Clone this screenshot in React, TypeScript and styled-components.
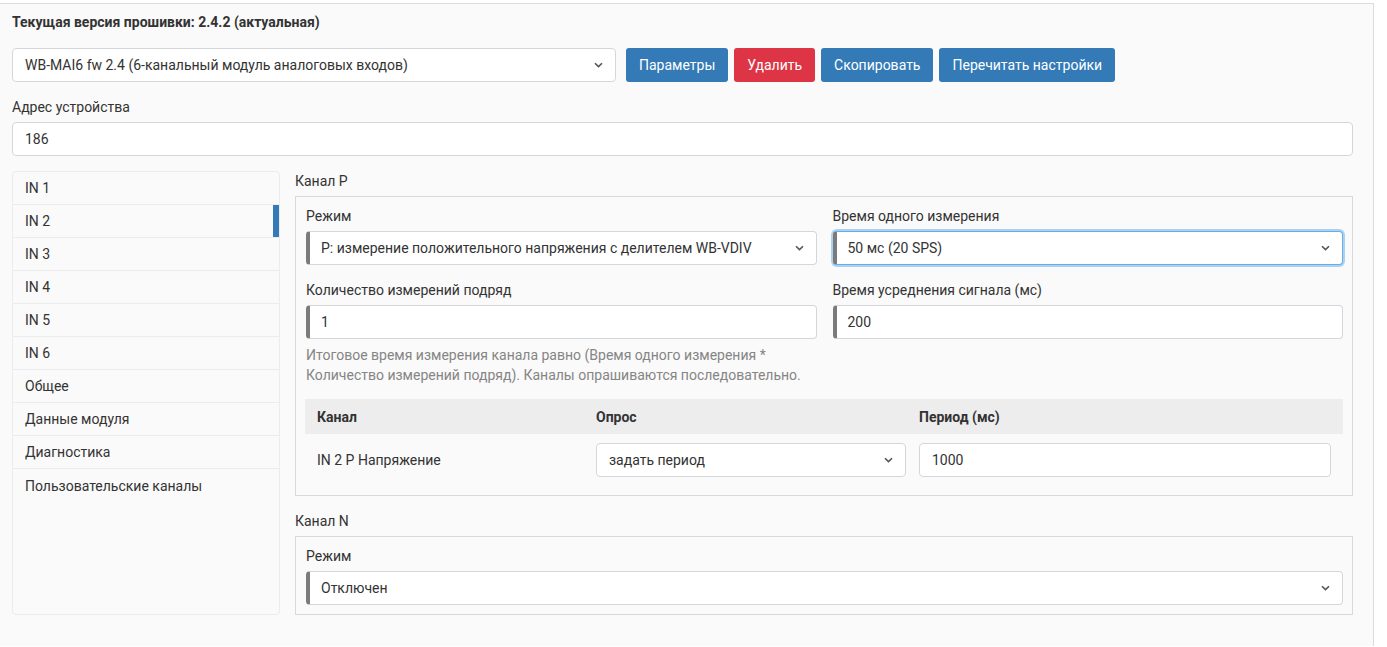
import React from 'react';
import styled, { createGlobalStyle, css } from 'styled-components';

const GlobalStyle = createGlobalStyle`
  body {
    margin: 0;
    background: #fff;
    font-family: Roboto, "Liberation Sans", Arial, sans-serif;
    font-size: 14px;
    color: #333;
  }
`

const Page = styled.div`
  margin-top: 3px;
  width: 1374px;
  min-height: 643px;
  box-sizing: border-box;
  padding: 8px 20px 20px 12px;
  background: #fafafa;
  border-top: 1px solid #dcdcdc;
  border-right: 1px solid #dcdcdc;
`
const Title = styled.div`
  font-weight: 700;
  line-height: 20px;
  margin-bottom: 16px;
`
const Toolbar = styled.div`
  display: flex;
  gap: 6px;
  margin-bottom: 15px;
`
const Buttons = styled.div`
  display: flex;
  gap: 6px;
  margin-left: 4px;
`
const Label = styled.div`
  line-height: 20px;
  margin-bottom: 5px;
`
const Field = css<{ $marked?: boolean; $focused?: boolean }>`
  box-sizing: border-box;
  height: 34px;
  display: flex;
  align-items: center;
  background: #fff;
  border: 1px solid #d3d7dc;
  border-radius: 4px;
  padding: 0 12px;
  color: #333;
  line-height: 20px;
  ${p => p.$marked && css`
    border-left: 4px solid #7b7b7b;
    padding-left: 11px;
  `}
  ${p => p.$focused && css`
    border-color: #66afe9;
    border-left-color: #7b7b7b;
    box-shadow: 0 0 0 2px rgba(102, 175, 233, 0.55);
  `}
`
const SelectBox = styled.div<{ $marked?: boolean; $focused?: boolean; $width?: number }>`
  ${Field}
  justify-content: space-between;
  ${p => p.$width && css`width: ${p.$width}px;`}
`
const InputBox = styled.div<{ $marked?: boolean; $focused?: boolean }>`
  ${Field}
  width: 100%;
`
const Button = styled.div<{ $danger?: boolean }>`
  box-sizing: border-box;
  height: 34px;
  display: flex;
  align-items: center;
  padding: 0 13px;
  border-radius: 3px;
  color: #fff;
  background: ${p => (p.$danger ? '#dd3545' : '#337ab7')};
  white-space: nowrap;
`
const Main = styled.div`
  display: flex;
  gap: 15px;
  margin-top: 15px;
`
const Nav = styled.div`
  width: 268px;
  flex-shrink: 0;
  box-sizing: border-box;
  border: 1px solid #ececec;
  border-radius: 4px;
  background: #fafafa;
`
const NavItem = styled.div<{ $active?: boolean }>`
  height: 33px;
  box-sizing: border-box;
  display: flex;
  align-items: center;
  padding-left: 12px;
  border-bottom: 1px solid #ececec;
  ${p => p.$active && css`
    box-shadow: inset -6px 0 0 #337ab7;
  `}
  &:last-child {
    border-bottom: none;
  }
`
const Content = styled.div`
  flex: 1;
  display: flex;
  flex-direction: column;
`
const Group = styled.div`
  border: 1px solid #d6d9dd;
  padding: 9px 9px 9px 10px;
  margin-bottom: 15px;
  &:last-child {
    margin-bottom: 0;
  }
`
const Grid = styled.div`
  display: grid;
  grid-template-columns: 1fr 1fr;
  column-gap: 16px;
  row-gap: 15px;
`
const Help = styled.div`
  color: #858585;
  line-height: 19.5px;
  margin-top: 7px;
`
const Table = styled.table`
  width: calc(100% + 1px);
  margin: 14px 0 0 -1px;
  border-collapse: collapse;
  table-layout: fixed;
  th {
    background: #ededed;
    text-align: left;
    font-weight: 700;
    height: 35px;
    padding: 0;
  }
  td {
    padding: 9px 0;
  }
  th:first-child, td:first-child {
    padding-left: 12px;
  }
  th:nth-child(2), td:nth-child(2) {
    padding-right: 13px;
  }
  th:last-child, td:last-child {
    padding-right: 12px;
  }
`

function Chevron() {
  return (
    <svg width="9" height="6" viewBox="0 0 9 6">
      <path d="M1 1.2 L4.5 4.6 L8 1.2" fill="none" stroke="#555" strokeWidth="1.6" />
    </svg>
  );
}

function Select({ value, ...rest }: { value: string; $marked?: boolean; $focused?: boolean; $width?: number }) {
  return (
    <SelectBox {...rest}>
      <span>{value}</span>
      <Chevron />
    </SelectBox>
  );
}

const navItems = ['IN 1', 'IN 2', 'IN 3', 'IN 4', 'IN 5', 'IN 6', 'Общее', 'Данные модуля', 'Диагностика', 'Пользовательские каналы'];

function App() {
  return (
    <>
      <GlobalStyle />
      <Page>
        <Title>Текущая версия прошивки: 2.4.2 (актуальная)</Title>
        <Toolbar>
          <Select $width={604} value="WB-MAI6 fw 2.4 (6-канальный модуль аналоговых входов)" />
          <Buttons>
            <Button>Параметры</Button>
            <Button $danger>Удалить</Button>
            <Button>Скопировать</Button>
            <Button>Перечитать настройки</Button>
          </Buttons>
        </Toolbar>
        <Label>Адрес устройства</Label>
        <InputBox>186</InputBox>
        <Main>
          <Nav>
            {navItems.map(x => (
              <NavItem key={x} $active={x === 'IN 2'}>{x}</NavItem>
            ))}
          </Nav>
          <Content>
            <Label>Канал P</Label>
            <Group>
              <Grid>
                <div>
                  <Label>Режим</Label>
                  <Select $marked value="P: измерение положительного напряжения с делителем WB-VDIV" />
                </div>
                <div>
                  <Label>Время одного измерения</Label>
                  <Select $marked $focused value="50 мс (20 SPS)" />
                </div>
                <div>
                  <Label>Количество измерений подряд</Label>
                  <InputBox $marked>1</InputBox>
                </div>
                <div>
                  <Label>Время усреднения сигнала (мс)</Label>
                  <InputBox $marked>200</InputBox>
                </div>
              </Grid>
              <Help>
                Итоговое время измерения канала равно (Время одного измерения *
                <br />
                Количество измерений подряд). Каналы опрашиваются последовательно.
              </Help>
              <Table>
                <colgroup>
                  <col style={{ width: 291 }} />
                  <col style={{ width: 323 }} />
                  <col />
                </colgroup>
                <thead>
                  <tr>
                    <th>Канал</th>
                    <th>Опрос</th>
                    <th>Период (мс)</th>
                  </tr>
                </thead>
                <tbody>
                  <tr>
                    <td>IN 2 P Напряжение</td>
                    <td><Select value="задать период" /></td>
                    <td><InputBox>1000</InputBox></td>
                  </tr>
                </tbody>
              </Table>
            </Group>
            <Label>Канал N</Label>
            <Group>
              <Label>Режим</Label>
              <Select $marked value="Отключен" />
            </Group>
          </Content>
        </Main>
      </Page>
    </>
  );
}

export default App;
